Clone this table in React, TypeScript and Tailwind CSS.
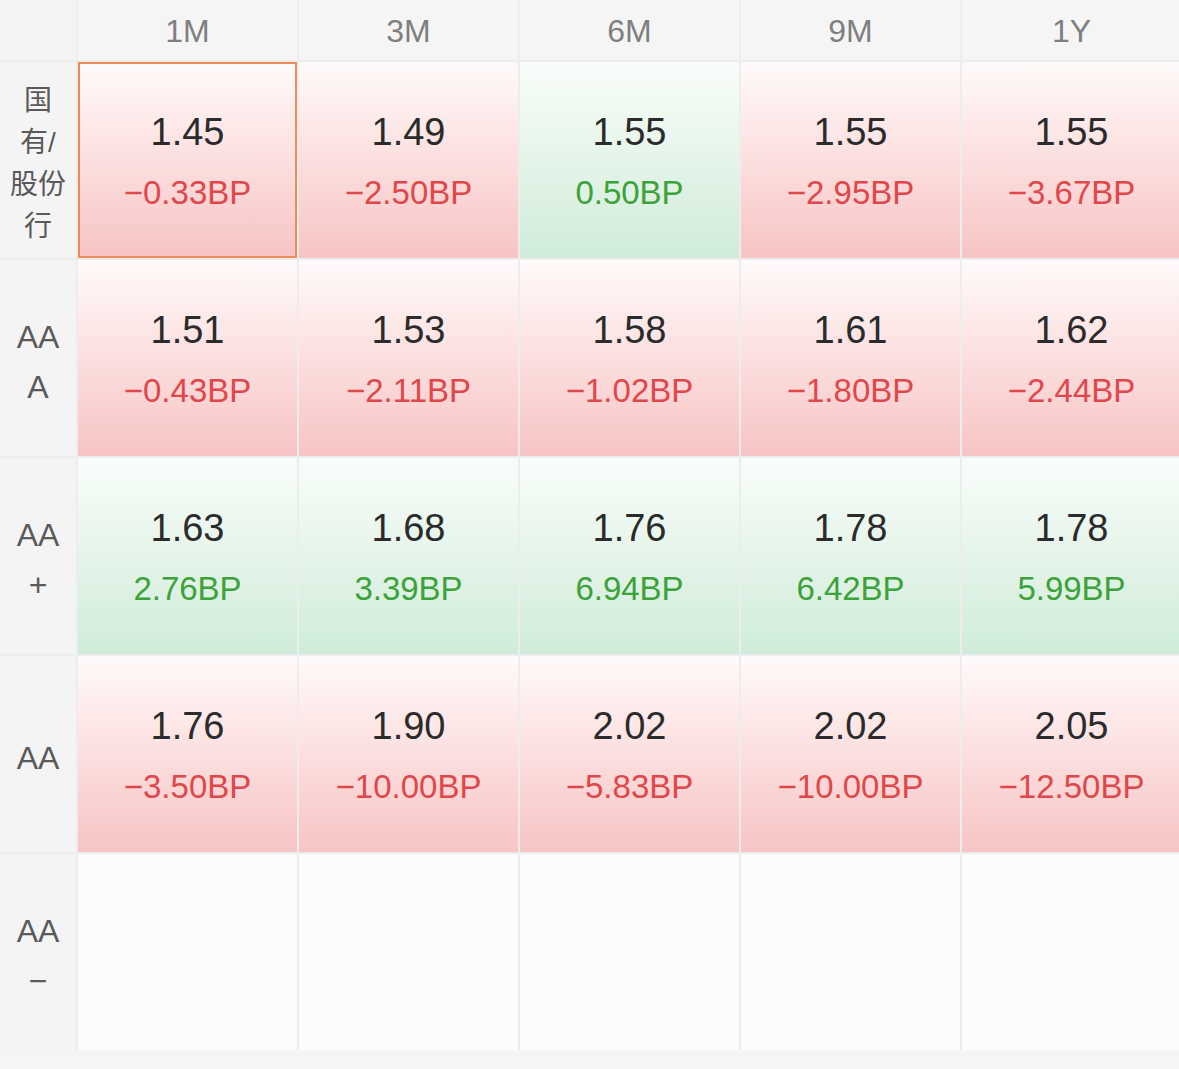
import React from "react";

type Cell = { v: string; bp: string } | null;

const cols = ["1M", "3M", "6M", "9M", "1Y"];

const rows: { label: React.ReactNode; cells: Cell[] }[] = [
  {
    label: (
      <div className="text-[28px] leading-[42px]">
        国<br />有/<br />股份<br />行
      </div>
    ),
    cells: [
      { v: "1.45", bp: "−0.33BP" },
      { v: "1.49", bp: "−2.50BP" },
      { v: "1.55", bp: "0.50BP" },
      { v: "1.55", bp: "−2.95BP" },
      { v: "1.55", bp: "−3.67BP" },
    ],
  },
  {
    label: (
      <div className="text-[32px] leading-[50px]">
        AA<br />A
      </div>
    ),
    cells: [
      { v: "1.51", bp: "−0.43BP" },
      { v: "1.53", bp: "−2.11BP" },
      { v: "1.58", bp: "−1.02BP" },
      { v: "1.61", bp: "−1.80BP" },
      { v: "1.62", bp: "−2.44BP" },
    ],
  },
  {
    label: (
      <div className="text-[32px] leading-[50px]">
        AA<br />+
      </div>
    ),
    cells: [
      { v: "1.63", bp: "2.76BP" },
      { v: "1.68", bp: "3.39BP" },
      { v: "1.76", bp: "6.94BP" },
      { v: "1.78", bp: "6.42BP" },
      { v: "1.78", bp: "5.99BP" },
    ],
  },
  {
    label: <div className="text-[32px] leading-[50px]">AA</div>,
    cells: [
      { v: "1.76", bp: "−3.50BP" },
      { v: "1.90", bp: "−10.00BP" },
      { v: "2.02", bp: "−5.83BP" },
      { v: "2.02", bp: "−10.00BP" },
      { v: "2.05", bp: "−12.50BP" },
    ],
  },
  {
    label: (
      <div className="text-[32px] leading-[50px]">
        AA<br />−
      </div>
    ),
    cells: [null, null, null, null, null],
  },
];

function RateCell({ cell, selected }: { cell: Cell; selected?: boolean }) {
  if (!cell) return <div className="bg-[#fcfcfc]" />;
  const down = cell.bp.startsWith("−");
  return (
    <div
      className={
        "flex flex-col items-center justify-center " +
        (down
          ? "bg-gradient-to-b from-[#fffafa] to-[#f7c4c4]"
          : "bg-gradient-to-b from-[#f9fdfa] to-[#d0ecd9]") +
        (selected ? " border-2 border-[#ef8c55]" : "")
      }
    >
      <div className="text-[38px] leading-none text-[#2b2b2b] mt-[2px]">{cell.v}</div>
      <div
        className={
          "text-[33px] leading-none mt-[25px] " + (down ? "text-[#e0474a]" : "text-[#3ca23a]")
        }
      >
        {cell.bp}
      </div>
    </div>
  );
}

export default function App() {
  return (
    <div
      className="w-[1179px] h-[1069px] overflow-hidden bg-[#f5f5f7]"
      style={{ fontFamily: '"Liberation Sans", "Noto Sans CJK SC", sans-serif' }}
    >
      <div className="w-[1181px] grid grid-cols-[76px_repeat(5,219px)] grid-rows-[60px_repeat(5,196px)] gap-[2px] bg-[#ededed]">
        <div className="bg-[#f4f4f4]" />
        {cols.map((c) => (
          <div
            key={c}
            className="bg-[#f5f5f5] flex items-center justify-center text-[32px] text-[#7f7f7f] pt-[2px]"
          >
            {c}
          </div>
        ))}
        {rows.map((r, ri) => (
          <React.Fragment key={ri}>
            <div className="bg-[#f4f4f4] flex items-center justify-center text-center text-[#5a5a5a] pt-[8px]">
              {r.label}
            </div>
            {r.cells.map((cell, ci) => (
              <RateCell key={ci} cell={cell} selected={ri === 0 && ci === 0} />
            ))}
          </React.Fragment>
        ))}
      </div>
    </div>
  );
}
